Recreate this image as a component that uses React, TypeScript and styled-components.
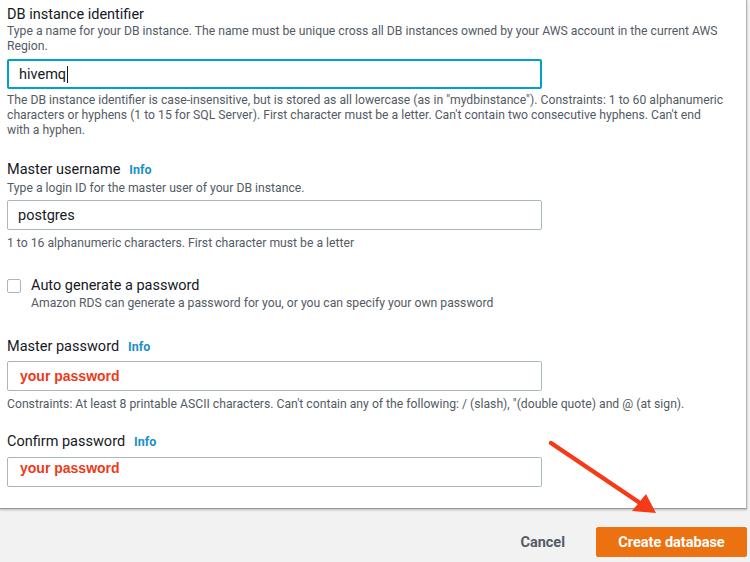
import React from 'react';
import styled, { createGlobalStyle } from 'styled-components';

const GlobalStyle = createGlobalStyle`
  * { box-sizing: border-box; }
  body {
    margin: 0;
    background: #f2f2f2;
    font-family: Roboto, "Open Sans", Arial, sans-serif;
    color: #16191f;
  }
`;

const Page = styled.div`
  position: relative;
  width: 750px;
  height: 562px;
  overflow: hidden;
`;

const Panel = styled.div`
  width: 747px;
  background: #ffffff;
  border-right: 1px solid #aab7b8;
  border-bottom: 1px solid #9a9a9a;
  box-shadow: 0 1px 2px rgba(0, 0, 0, 0.25);
  padding: 5px 0 21px 7px;
`;

const Field = styled.div<{ gap: number }>`
  margin-top: ${p => p.gap}px;
`;

const Label = styled.div`
  display: flex;
  align-items: baseline;
  gap: 9px;
  font-size: 14.5px;
  line-height: 19px;
  color: #16191f;
`;

const InfoLink = styled.span`
  font-size: 12.5px;
  font-weight: 700;
  color: #1a8fc9;
`;

const Hint = styled.div<{ gap?: number }>`
  margin-top: ${p => p.gap ?? 0}px;
  font-size: 12.2px;
  line-height: 15px;
  color: #545b64;
  white-space: nowrap;
`;

const InputBox = styled.div<{ focused?: boolean; gap: number }>`
  display: flex;
  align-items: center;
  margin-top: ${p => p.gap}px;
  width: 535px;
  height: 30px;
  padding: 0 10px;
  border: ${p => (p.focused ? '2px solid #00a1c9' : '1px solid #aab7b8')};
  border-radius: 2px;
  font-size: 14.5px;
  color: #16191f;
  background: #ffffff;
`;

const Caret = styled.span`
  display: inline-block;
  width: 1px;
  height: 17px;
  background: #16191f;
  margin-left: 1px;
`;

const Annotated = styled.span<{ lift?: number }>`
  font-family: "Liberation Sans", Arial, sans-serif;
  font-weight: 700;
  font-size: 14px;
  color: #ec3a1b;
  margin-left: 2px;
  position: relative;
  top: ${p => -(p.lift ?? 0)}px;
`;

const CheckRow = styled.div`
  display: flex;
  align-items: flex-start;
  gap: 10px;
  margin-top: 25px;
`;

const CheckBox = styled.div`
  flex: none;
  width: 14px;
  height: 14px;
  margin-top: 3px;
  border: 1px solid #aab7b8;
  border-radius: 2px;
  background: #ffffff;
`;

const Footer = styled.div`
  display: flex;
  justify-content: flex-end;
  align-items: center;
  gap: 31px;
  padding: 18px 3px 0 0;
`;

const CancelButton = styled.button`
  border: none;
  background: transparent;
  padding: 0;
  font-family: inherit;
  font-size: 14.5px;
  font-weight: 700;
  color: #545b64;
`;

const PrimaryButton = styled.button`
  width: 151px;
  height: 30px;
  border: 1px solid #ec7211;
  border-radius: 2px;
  background: #ec7211;
  color: #ffffff;
  font-family: inherit;
  font-size: 14.5px;
  font-weight: 700;
`;

const ArrowLayer = styled.svg`
  position: absolute;
  left: 0;
  top: 0;
  pointer-events: none;
`;

const App: React.FC = () => {
  return (
    <Page>
      <GlobalStyle />
      <Panel>
        <Label>DB instance identifier</Label>
        <Hint gap={0}>
          Type a name for your DB instance. The name must be unique cross all DB instances owned by your AWS account in the current AWS
          <br />
          Region.
        </Hint>
        <InputBox focused gap={5}>
          hivemq
          <Caret />
        </InputBox>
        <Hint gap={4}>
          The DB instance identifier is case-insensitive, but is stored as all lowercase (as in "mydbinstance"). Constraints: 1 to 60 alphanumeric
          <br />
          characters or hyphens (1 to 15 for SQL Server). First character must be a letter. Can't contain two consecutive hyphens. Can't end
          <br />
          with a hyphen.
        </Hint>

        <Field gap={22}>
          <Label>
            Master username <InfoLink>Info</InfoLink>
          </Label>
          <Hint gap={2}>Type a login ID for the master user of your DB instance.</Hint>
          <InputBox gap={4}>postgres</InputBox>
          <Hint gap={6}>1 to 16 alphanumeric characters. First character must be a letter</Hint>
        </Field>

        <CheckRow>
          <CheckBox />
          <div>
            <Label>Auto generate a password</Label>
            <Hint gap={1}>Amazon RDS can generate a password for you, or you can specify your own password</Hint>
          </div>
        </CheckRow>

        <Field gap={26}>
          <Label>
            Master password <InfoLink>Info</InfoLink>
          </Label>
          <InputBox gap={5}>
            <Annotated>your password</Annotated>
          </InputBox>
          <Hint gap={6}>
            Constraints: At least 8 printable ASCII characters. Can't contain any of the following: / (slash), "(double quote) and @ (at sign).
          </Hint>
        </Field>

        <Field gap={20}>
          <Label>
            Confirm password <InfoLink>Info</InfoLink>
          </Label>
          <InputBox gap={6}>
            <Annotated lift={4}>your password</Annotated>
          </InputBox>
        </Field>
      </Panel>

      <Footer>
        <CancelButton>Cancel</CancelButton>
        <PrimaryButton>Create database</PrimaryButton>
      </Footer>

      <ArrowLayer width="750" height="562" viewBox="0 0 750 562">
        <line x1="551" y1="443" x2="640" y2="503" stroke="#f53a17" strokeWidth="4.5" strokeLinecap="round" />
        <polygon points="656,513 632,511 646,494" fill="#f53a17" />
      </ArrowLayer>
    </Page>
  );
};

export default App;
